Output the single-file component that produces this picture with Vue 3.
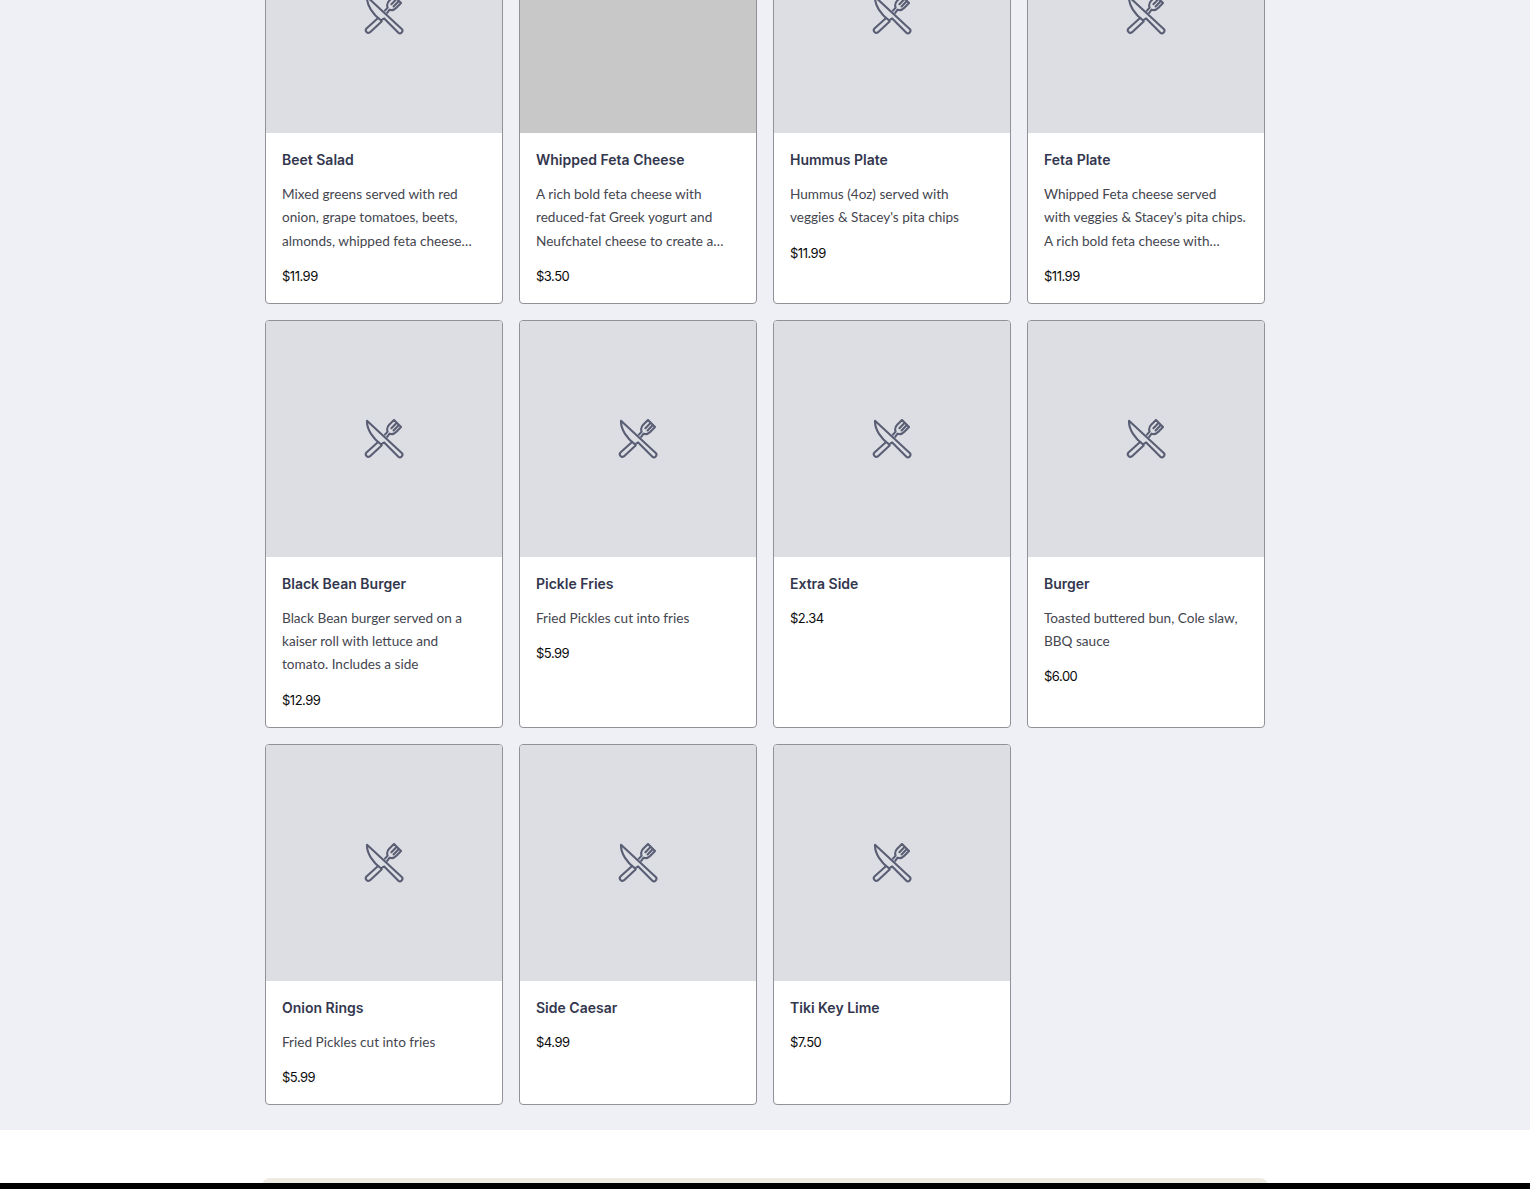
<script setup>
const items = [
  { name: "Beet Salad", desc: "Mixed greens served with red onion, grape tomatoes, beets, almonds, whipped feta cheese and a house vinaigrette dressing", price: "$11.99" },
  { name: "Whipped Feta Cheese", desc: "A rich bold feta cheese with reduced-fat Greek yogurt and Neufchatel cheese to create a creamy and delicious spread", price: "$3.50", noIcon: true },
  { name: "Hummus Plate", desc: "Hummus (4oz) served with veggies & Stacey's pita chips", price: "$11.99" },
  { name: "Feta Plate", desc: "Whipped Feta cheese served\nwith veggies & Stacey's pita chips. A rich bold feta cheese with reduced-fat Greek yogurt", price: "$11.99" },
  { name: "Black Bean Burger", desc: "Black Bean burger served on a kaiser roll with lettuce and tomato. Includes a side", price: "$12.99" },
  { name: "Pickle Fries", desc: "Fried Pickles cut into fries", price: "$5.99" },
  { name: "Extra Side", desc: "", price: "$2.34" },
  { name: "Burger", desc: "Toasted buttered bun, Cole slaw, BBQ sauce", price: "$6.00" },
  { name: "Onion Rings", desc: "Fried Pickles cut into fries", price: "$5.99" },
  { name: "Side Caesar", desc: "", price: "$4.99" },
  { name: "Tiki Key Lime", desc: "", price: "$7.50" },
];
</script>

<template>
  <div class="page">
    <section class="menu">
      <div class="grid">
        <article v-for="item in items" :key="item.name" class="card">
          <div class="thumb" :class="{ blank: item.noIcon }">
            <svg v-if="!item.noIcon" class="icon" viewBox="0 0 40 40" fill="none" stroke="#5a5e74" stroke-width="2.1" stroke-linejoin="round" stroke-linecap="round">
              <path d="M3 1.8 L38 34.2 a2.6 2.6 0 0 1 -3.6 3.6 L20.2 23.4 L17 25.4 C9 19.5 2.6 10.5 3 1.8 Z" />
              <path d="M13.8 23.2 L2.2 33.8 a2.6 2.6 0 0 0 3.6 3.6 L17.6 26.4" />
              <path d="M21 15.6 L23.6 12.6 C22.8 10.5 23 8 25.2 5.8 L30 1 L37 8 L32.4 12.8 C30.2 15 27.6 15.6 25.6 14.6 L23.2 17.8 M27.4 9.2 L32 4.6 M29.6 11.4 L34.4 6.6" />
            </svg>
          </div>
          <div class="body">
            <h3 class="name">{{ item.name }}</h3>
            <p v-if="item.desc" class="desc">{{ item.desc }}</p>
            <p class="price">{{ item.price }}</p>
          </div>
        </article>
      </div>
    </section>
    <footer class="footer">
      <div class="footer-card"></div>
    </footer>
    <div class="bar"></div>
  </div>
</template>

<style scoped>
.page {
  height: 1189px;
  overflow: hidden;
  background: #fff;
  font-family: "Lato", sans-serif;
}

.menu {
  margin-top: -104px;
  padding: 0 0 25px;
  background: #eef0f5;
}

.grid {
  width: 1000px;
  margin: 0 auto;
  display: grid;
  grid-template-columns: repeat(4, 238px);
  gap: 16px;
}

.card {
  border: 1px solid #919197;
  border-radius: 4px;
  background: #fff;
  overflow: hidden;
}

.thumb {
  height: 236px;
  display: flex;
  align-items: center;
  justify-content: center;
  background: #dddee3;
}

.thumb.blank {
  background: #c8c8c8;
}

.icon {
  width: 40px;
  height: 40px;
}

.body {
  padding: 16px 16px 15.8px;
}

.name {
  margin: 0;
  font-family: "Inter", sans-serif;
  font-size: 14px;
  font-weight: 600;
  line-height: 22px;
  color: #33374e;
}

.desc {
  margin: 12px 0 0;
  font-size: 13.6px;
  line-height: 23.33px;
  color: #44464f;
  white-space: pre-line;
  display: -webkit-box;
  -webkit-line-clamp: 3;
  -webkit-box-orient: vertical;
  overflow: hidden;
}

.price {
  margin: 12px 0 0;
  font-family: "Inter", sans-serif;
  font-size: 13px;
  letter-spacing: -0.5px;
  line-height: 22px;
  color: #0a0a0a;
}

.footer {
  padding-top: 48px;
  background: #fff;
}

.footer-card {
  width: 1006px;
  height: 40px;
  margin: 0 auto;
  background: #eeebe3;
  border-radius: 8px 8px 0 0;
}

.bar {
  position: fixed;
  left: 0;
  right: 0;
  bottom: 0;
  height: 6px;
  background: #000;
}
</style>
